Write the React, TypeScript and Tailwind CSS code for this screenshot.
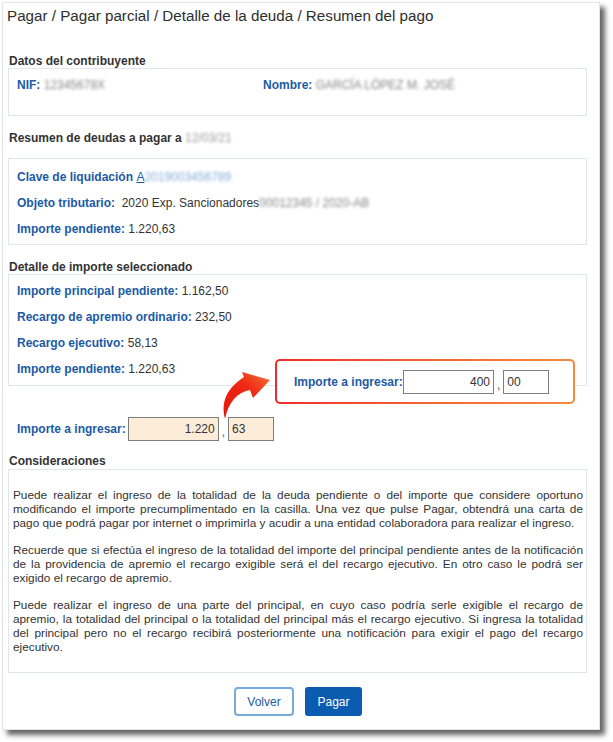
import React from 'react';

const LABEL = 'font-bold text-[#1c5aa6]';
const VALUE = 'text-[#333]';

function Box({ className, children }: { className?: string; children: React.ReactNode }) {
  return <div className={`border border-[#dfe6ee] pl-[8px] ${className ?? ''}`}>{children}</div>;
}

function Row({ label, children }: { label: string; children?: React.ReactNode }) {
  return (
    <div className="flex h-[26px] items-center whitespace-pre">
      <span className={LABEL}>{label}</span>
      <span className={VALUE}>{children}</span>
    </div>
  );
}

function Blur({ children, className }: { children: React.ReactNode; className?: string }) {
  return <span className={`inline-block select-none blur-[1.4px] ${className ?? 'text-[#858585]'}`}>{children}</span>;
}

function AmountInputs({ whole, cents, peach }: { whole: string; cents: string; peach?: boolean }) {
  const base = `h-[24px] border border-[#7d7d7d] px-[3px] text-[12px] text-[#333] outline-none ${
    peach ? 'bg-[#fdecd8]' : 'bg-white'
  }`;
  return (
    <div className="flex items-center">
      <input readOnly value={whole} className={`${base} w-[91px] text-right`} />
      <span className="mx-[3px] mt-[6px] text-[#555]">,</span>
      <input readOnly value={cents} className={`${base} w-[46px]`} />
    </div>
  );
}

function CurvedArrow() {
  return (
    <svg width="62" height="58" viewBox="0 0 62 58" className="absolute left-[211px] top-[359px]">
      <defs>
        <linearGradient id="arr" x1="0" y1="1" x2="1" y2="0">
          <stop offset="0" stopColor="#e4150c" />
          <stop offset="0.6" stopColor="#ee2a14" />
          <stop offset="1" stopColor="#f6763a" />
        </linearGradient>
      </defs>
      <path d="M11 57 Q4 32 30 15 L28 10 L56 18 L39 36 L36 28 Q16 32 11 57 Z" fill="url(#arr)" />
    </svg>
  );
}

export default function App() {
  return (
    <div
      className="h-[742px] w-[613px] overflow-hidden bg-white pl-[2px] pt-[2px] text-[12px] leading-[14px]"
      style={{ fontFamily: '"Liberation Sans", Arial, sans-serif' }}
    >
      <div className="relative h-[728px] w-[598px] border border-[#e4e4e4] pl-[5px] pr-[12px] shadow-[5px_5px_5px_rgba(0,0,0,0.6)]">
        <h1 className="ml-[-1px] mt-[4px] h-[18px] text-[15.2px] leading-[18px] text-[#2e2e2e]">
          Pagar / Pagar parcial / Detalle de la deuda / Resumen del pago
        </h1>

        {/* Datos del contribuyente */}
        <h2 className="ml-[1px] mt-[29px] h-[14px] font-bold text-[#333]">Datos del contribuyente</h2>
        <Box className="pb-[17px] pt-[3px]">
          <div className="grid grid-cols-[246px_1fr]">
            <Row label="NIF: ">
              <Blur>12345678X</Blur>
            </Row>
            <Row label="Nombre: ">
              <Blur>GARCÍA LÓPEZ</Blur> <Blur>M. JOSÉ</Blur>
            </Row>
          </div>
        </Box>

        {/* Resumen de deudas */}
        <h2 className="ml-[1px] mt-[15px] h-[14px] whitespace-pre font-bold text-[#333]">
          Resumen de deudas a pagar a <Blur className="font-normal text-[#999]">12/03/21</Blur>
        </h2>
        <Box className="mt-[13px] pb-[2px] pt-[5px]">
          <Row label="Clave de liquidación ">
            <span className="text-[#1c5aa6] underline">
              A<Blur className="text-[#84acd9]">2019003456789</Blur>
            </span>
          </Row>
          <Row label="Objeto tributario:">
            {'  2020 Exp. Sancionadores'}
            <Blur>00012345 / 2020-AB</Blur>
          </Row>
          <Row label="Importe pendiente: ">1.220,63</Row>
        </Box>

        {/* Detalle de importe */}
        <h2 className="ml-[1px] mt-[15px] h-[14px] font-bold text-[#333]">Detalle de importe seleccionado</h2>
        <Box className="pb-[3px] pt-[3px]">
          <Row label="Importe principal pendiente: ">1.162,50</Row>
          <Row label="Recargo de apremio ordinario: ">232,50</Row>
          <Row label="Recargo ejecutivo: ">58,13</Row>
          <Row label="Importe pendiente: ">1.220,63</Row>
        </Box>

        <div className="ml-[9px] mt-[31px] flex h-[24px] items-center gap-[2px]">
          <span className={LABEL}>Importe a ingresar:</span>
          <AmountInputs whole="1.220" cents="63" peach />
        </div>

        {/* Consideraciones */}
        <h2 className="ml-[1px] mt-[13px] h-[14px] font-bold text-[#333]">Consideraciones</h2>
        <div className="mt-[1px] border border-[#dfe6ee] pb-[18px] pl-[4px] pr-[3px] pt-[18px] text-justify text-[11.8px] leading-[14px] text-[#333]">
          <p>
            Puede realizar el ingreso de la totalidad de la deuda pendiente o del importe que considere oportuno
            modificando el importe precumplimentado en la casilla. Una vez que pulse Pagar, obtendrá una carta de pago
            que podrá pagar por internet o imprimirla y acudir a una entidad colaboradora para realizar el ingreso.
          </p>
          <p className="mt-[13px]">
            Recuerde que si efectúa el ingreso de la totalidad del importe del principal pendiente antes de la
            notificación de la providencia de apremio el recargo exigible será el del recargo ejecutivo. En otro caso le
            podrá ser exigido el recargo de apremio.
          </p>
          <p className="mt-[13px]">
            Puede realizar el ingreso de una parte del principal, en cuyo caso podría serle exigible el recargo de
            apremio, la totalidad del principal o la totalidad del principal más el recargo ejecutivo. Si ingresa la
            totalidad del principal pero no el recargo recibirá posteriormente una notificación para exigir el pago del
            recargo ejecutivo.
          </p>
        </div>

        <div className="mt-[14px] flex justify-center gap-[11px] pl-[1px]">
          <button className="h-[29px] w-[60px] rounded-[4px] border-2 border-[#78a9dc] bg-white text-[12px] text-[#24589a]">
            Volver
          </button>
          <button className="h-[29px] w-[57px] rounded-[3px] bg-[#0b5bb0] text-[12px] text-white">Pagar</button>
        </div>

        {/* highlighted amount */}
        <div className="absolute left-[272px] top-[356px] h-[45px] w-[300px] rounded-[5px] bg-linear-to-r from-[#ef2a2c] to-[#f58a3e] p-[2px]">
          <div className="flex h-full items-center rounded-[3px] bg-white pl-[17px] pt-[1px]">
            <span className={`${LABEL} w-[109px] shrink-0 whitespace-nowrap`}>Importe a ingresar:</span>
            <AmountInputs whole="400" cents="00" />
          </div>
        </div>
        <CurvedArrow />
      </div>
    </div>
  );
}
